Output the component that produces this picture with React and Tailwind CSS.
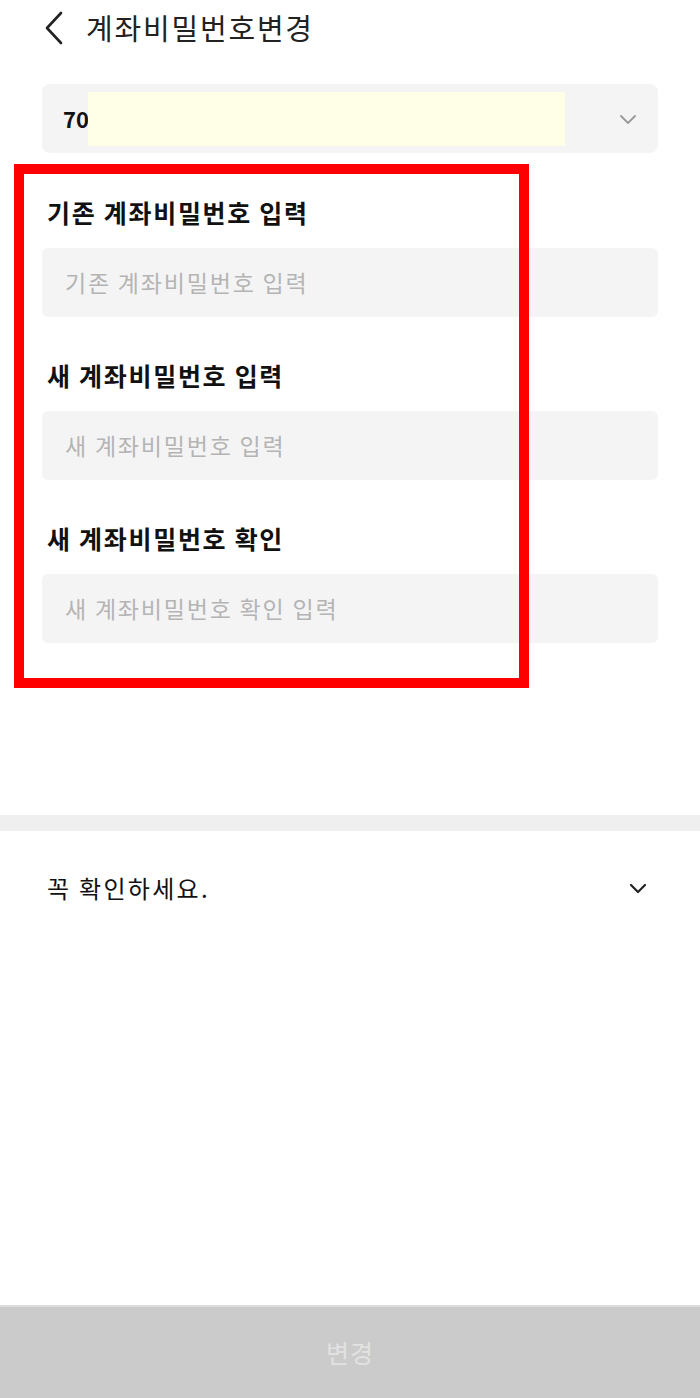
import React from "react";

function Chevron({ className, stroke = "#888", width = 1.6 }) {
  return (
    <svg viewBox="0 0 24 24" className={className} fill="none" stroke={stroke} strokeWidth={width} strokeLinecap="round" strokeLinejoin="round">
      <path d="M5 9l7 7 7-7" />
    </svg>
  );
}

function Field({ label, placeholder }) {
  return (
    <div>
      <div className="h-[34px] leading-[34px] text-[25px] font-bold text-[#111] pl-[5px] tracking-[1.7px]">{label}</div>
      <div className="mt-[19px] h-[69px] rounded-[6px] bg-[#f4f4f4] flex items-center px-[23px]">
        <span className="text-[23px] text-[#b4b4b4] tracking-[1.8px]">{placeholder}</span>
      </div>
    </div>
  );
}

export default function App() {
  return (
    <div
      className="relative w-[700px] h-[1398px] bg-white flex flex-col overflow-hidden"
      style={{ fontFamily: '"Noto Sans CJK KR", "Noto Sans", sans-serif' }}
    >
      {/* HEADER */}
      <div className="h-[56px] flex items-center pl-[42px]">
        <svg viewBox="0 0 24 36" className="w-[24px] h-[36px]" fill="none" stroke="#222" strokeWidth="2.6" strokeLinecap="round" strokeLinejoin="round">
          <path d="M19 3L5 18l14 15" />
        </svg>
        <h1 className="ml-[20px] text-[29px] text-[#222] tracking-[1.8px]">계좌비밀번호변경</h1>
      </div>

      {/* ACCOUNT SELECT */}
      <div className="mx-[42px] mt-[28px] h-[69px] rounded-[8px] bg-[#f4f4f5] flex items-center pl-[21px] pr-[18px]">
        <span className="text-[22px] font-bold text-[#111] w-[25px] overflow-hidden">70</span>
        <div className="h-[54px] w-[477px] bg-[#fffee7]" />
        <div className="flex-1" />
        <Chevron className="w-[24px] h-[24px]" stroke="#999" width={1.8} />
      </div>

      {/* FORM */}
      <div className="mx-[42px] mt-[42px] flex flex-col gap-[41px]">
        <Field label="기존 계좌비밀번호 입력" placeholder="기존 계좌비밀번호 입력" />
        <Field label="새 계좌비밀번호 입력" placeholder="새 계좌비밀번호 입력" />
        <Field label="새 계좌비밀번호 확인" placeholder="새 계좌비밀번호 확인 입력" />
      </div>

      {/* DIVIDER */}
      <div className="mt-[172px] h-[16px] bg-[#efefef]" />

      {/* NOTICE */}
      <div className="mt-[40px] h-[34px] flex items-center justify-between pl-[47px] pr-[50px]">
        <span className="text-[24px] text-[#111] tracking-[2.3px]">꼭 확인하세요.</span>
        <Chevron className="w-[24px] h-[24px]" stroke="#222" width={2.2} />
      </div>

      <div className="flex-1" />

      {/* SUBMIT */}
      <button className="h-[93px] w-full border-t-2 border-[#dcdcdc] bg-[#cbcbcb] flex items-center justify-center">
        <span className="text-[25px] text-[#e2e2e2] tracking-[1px]">변경</span>
      </button>

      {/* ANNOTATION */}
      <div className="absolute left-[14px] top-[164px] w-[515px] h-[524px] border-[10px] border-[#ff0000] pointer-events-none" />
    </div>
  );
}
